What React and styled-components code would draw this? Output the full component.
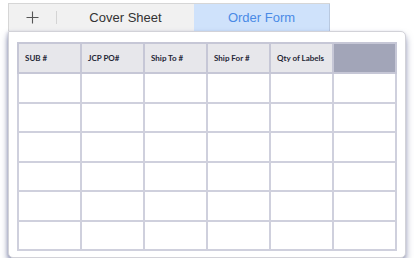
import styled, { createGlobalStyle } from "styled-components";

const GlobalStyle = createGlobalStyle`
  body {
    margin: 0;
    background: #ffffff;
    font-family: "Liberation Sans", Arial, sans-serif;
  }
`;

// ── Layout ───────────────────────────────────────────────────
const Frame = styled.div`
  width: 398px;
  margin: 3px 0 0 8px;
  display: flex;
  flex-direction: column;
`;

const TabBar = styled.div`
  width: 322px;
  height: 28px;
  display: flex;
  align-items: stretch;
  background: #f1f1f1;
  border-top: 1px solid #d6d6d6;
  border-left: 1px solid #d6d6d6;
  box-sizing: border-box;
`;

const AddButton = styled.div`
  width: 47px;
  display: flex;
  align-items: center;
  justify-content: center;
  color: #555;
`;

const Divider = styled.div`
  width: 1px;
  margin: 7px 0;
  background: #d4d4d4;
`;

const Tab = styled.div`
  flex: ${({ $active }) => ($active ? "0 0 135px" : "1")};
  display: flex;
  align-items: center;
  justify-content: center;
  font-size: 13px;
  color: ${({ $active }) => ($active ? "#4a8ae6" : "#333")};
  background: ${({ $active }) => ($active ? "#cfe2fb" : "transparent")};
  border-right: ${({ $active }) => ($active ? "1px solid #b9c9e0" : "none")};
`;

const Card = styled.div`
  background: #fff;
  border: 1px solid #d2d2d8;
  border-radius: 0 5px 5px 5px;
  box-shadow: 0 5px 7px rgba(70, 78, 130, 0.55), -1px 1px 3px rgba(70, 78, 130, 0.25);
  padding: 10px 8px 6px 8px;
  box-sizing: border-box;
  height: 227px;
`;

const Table = styled.table`
  width: 380px;
  border-collapse: collapse;
  table-layout: fixed;
  border: 2px solid #adafc4;
`;

const HeadCell = styled.th`
  height: 28px;
  padding: 0 0 0 6px;
  text-align: left;
  font-family: Lato, "Noto Sans", sans-serif;
  font-weight: 700;
  font-size: 8px;
  color: #1f2636;
  background: ${({ $dark }) => ($dark ? "#a2a5b8" : "#e7e7eb")};
  border: 2px solid #c6c7d6;
  white-space: nowrap;
`;

const Cell = styled.td`
  height: 27.5px;
  padding: 0;
  border: 2px solid #cfd0dd;
`;

const columns = ["SUB #", "JCP PO#", "Ship To #", "Ship For #", "Qty of Labels", ""];
const rows = [0, 1, 2, 3, 4, 5];

// ── Component ────────────────────────────────────────────────
const App = () => (
  <>
    <GlobalStyle />
    <Frame>
      <TabBar>
        <AddButton>
          <svg width="13" height="13" viewBox="0 0 13 13">
            <path d="M6.5 0.5v12M0.5 6.5h12" stroke="#555" strokeWidth="1.1" />
          </svg>
        </AddButton>
        <Divider />
        <Tab>Cover Sheet</Tab>
        <Tab $active>Order Form</Tab>
      </TabBar>
      <Card>
        <Table>
          <thead>
            <tr>
              {columns.map((c, i) => (
                <HeadCell key={i} $dark={c === ""}>{c}</HeadCell>
              ))}
            </tr>
          </thead>
          <tbody>
            {rows.map((r) => (
              <tr key={r}>
                {columns.map((_, i) => (
                  <Cell key={i} />
                ))}
              </tr>
            ))}
          </tbody>
        </Table>
      </Card>
    </Frame>
  </>
);

export default App;
